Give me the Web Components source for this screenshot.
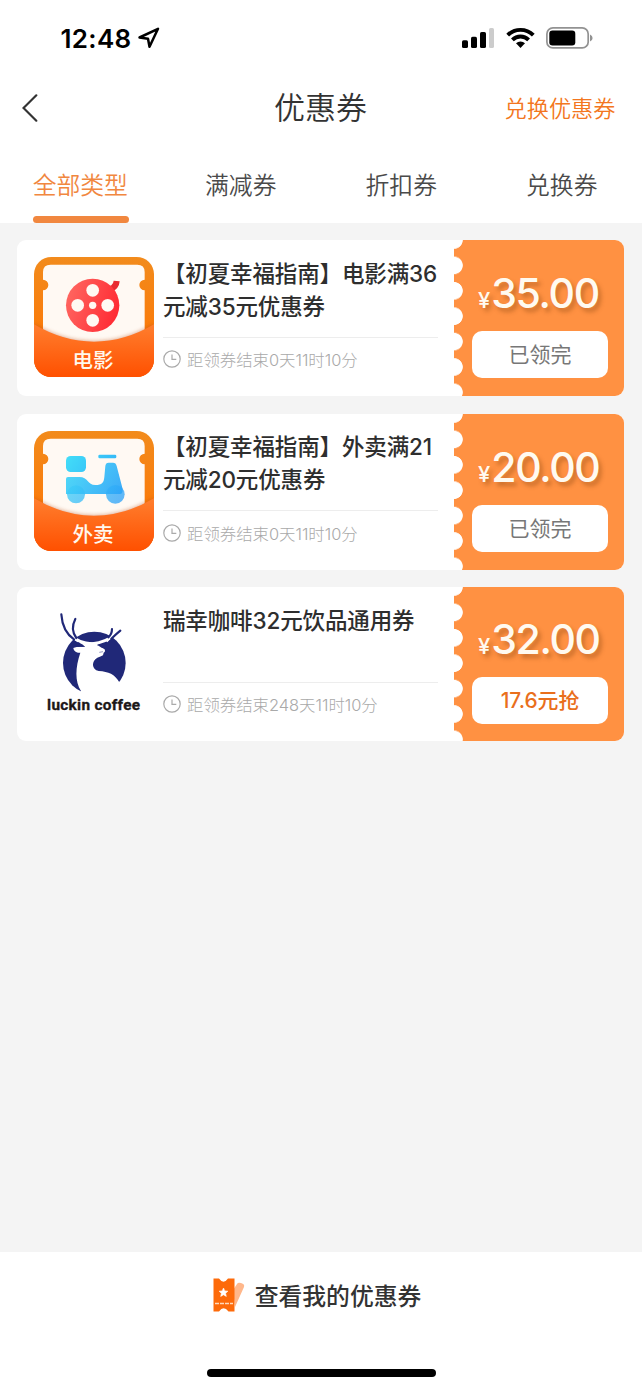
<!DOCTYPE html>
<html lang="zh-CN">
<head>
<meta charset="utf-8">
<title>优惠券</title>
<style>
html,body{margin:0;padding:0}
body{width:642px;height:1389px;overflow:hidden;font-family:Inter,"Noto Sans CJK SC",sans-serif;color:#333}
</style>
</head>
<body>
<coupon-app></coupon-app>

<template id="status-bar">
<style>
:host{display:flex;height:76px;box-sizing:border-box;padding:0 49px 0 60.5px;align-items:center;color:#000}
.time{font-size:26px;font-weight:600;letter-spacing:.3px;line-height:76px;padding-top:2px}
svg{display:block}
.loc{margin-left:6.500px}
.sp{flex:1}
.sig{margin-right:11px}.wifi{margin-right:11px}
</style>
<span class="time">12:48</span>
<svg class="loc" width="22" height="22" viewBox="0 0 22 22"><path d="M1.5 10.5 L20 1.8 L11.5 19.8 L10 11.8 Z" fill="none" stroke="#000" stroke-width="2.5" stroke-linejoin="round"/></svg>
<span class="sp"></span>
<svg class="sig" width="33" height="22" viewBox="-1 0 33 22"><rect x="0" y="13.3" width="6" height="7.7" rx="1.6"/><rect x="9" y="9.8" width="6" height="11.2" rx="1.6"/><rect x="18" y="5" width="6" height="16" rx="1.6"/><rect x="27" y="1" width="5" height="20" rx="1.6" fill="#ccc"/></svg>
<svg class="wifi" width="30" height="22" viewBox="-.5 0 30 22"><g fill="none" stroke="#000" stroke-width="3.9"><path d="M2.2 8.1 A18.2 18.2 0 0 1 27.8 8.1"/><path d="M6.9 12.9 A11.5 11.5 0 0 1 23.1 12.9"/></g><path d="M10.5 16.3 A6.4 6.4 0 0 1 19.5 16.3 L15 21Z"/></svg>
<svg width="47" height="22" viewBox="0 0 47 22"><rect x=".9" y=".9" width="41.3" height="20" rx="6" fill="none" stroke="#929292" stroke-width="1.7"/><rect x="3.3" y="3.5" width="26" height="15" rx="3.2"/><path d="M44 7.5 Q46.6 8.5 46.6 11 Q46.6 13.5 44 14.5Z" fill="#929292"/></svg>
</template>

<template id="nav-bar">
<style>
:host{display:grid;grid-template-columns:1fr auto 1fr;align-items:center;height:64px;padding:0 26.5px 0 22px}
svg{display:block}
.t{font-size:31px;line-height:40px;font-weight:350;margin-left:3.500px}
.a{justify-self:end;font-size:22.2px;color:#f37620;line-height:30px;font-weight:350;padding-top:1px}
</style>
<svg width="16" height="28" viewBox="0 0 16 28"><path d="M14.3 1.3 L1.5 14 L14.3 26.7" fill="none" stroke="#333" stroke-width="2.2" stroke-linecap="round"/></svg>
<span class="t"><slot></slot></span><span class="a"><slot name="action"></slot></span>
</template>

<template id="type-tab">
<style>
:host{display:flex;flex-direction:column;align-items:center;justify-content:space-between;flex:1;height:83px;color:#4a4a4a;font-size:23.8px;font-weight:350}
span{line-height:36px;padding-top:28px}
i{display:block;width:96px;height:7px;border-radius:3.5px;margin-left:1px}
:host([active]){color:#f1873f}
:host([active]) i{background:#f1873f}
</style>
<span><slot></slot></span><i></i>
</template>

<template id="coupon-card">
<style>
:host{display:flex;height:156px;width:607px;border-radius:9px;background:#fff;overflow:hidden}
:host([short]){height:154px}
.pic{width:120px;height:120px;margin:17px 9px 0 17px;flex:none}
.info{width:275px;flex:none;display:flex;flex-direction:column}
.title{height:97.5px;box-sizing:border-box;padding-top:16.500px;font-size:22.5px;letter-spacing:-.13px;line-height:33px;font-weight:500;color:#2e2e2e;border-bottom:1px solid #ededed;white-space:nowrap}
:host([short]) .title{height:95.5px}
.time{display:flex;align-items:center;height:43px;font-size:16.4px;color:#a9a9a9;font-weight:300}
.time svg{margin-right:6px}
.side{margin-left:auto;width:170px;flex:none;background:radial-gradient(circle at 0 50%,#fff 8.4px,transparent 9.1px) 0 -12.7px/10px 25.4px repeat-y,#ff9142;display:flex;flex-direction:column;align-items:flex-start}
.price{height:91px;box-sizing:border-box;padding:28px 0 0 24px;color:#fffaf0;white-space:nowrap;line-height:50px;font-size:41px;font-weight:500;text-shadow:3px 4px 4px rgba(120,60,10,.38);letter-spacing:-1.35px}
.price small{font-size:22px;letter-spacing:0;margin-right:1px}
.btn{margin-left:18px;width:136px;height:47px;border-radius:10px;background:#fff;text-align:center;font-size:21px;line-height:48px;color:#777;font-weight:400}
:host([short]) .price{height:89.5px;padding-top:27px}
:host([short]) .btn{color:#e96f1c;font-weight:500;font-size:20.9px}
</style>
<div class="pic"><slot name="pic"></slot></div>
<div class="info"><div class="title"><slot></slot></div>
<div class="time"><svg width="18" height="18" viewBox="0 0 18 18" fill="none" stroke="#aaa" stroke-width="1.2"><circle cx="9" cy="9" r="8.2"/><path d="M9 4.5V9.4H13.3"/></svg><slot name="time"></slot></div></div>
<div class="side"><div class="price"><small>¥</small><slot name="price"></slot></div><div class="btn"><slot name="btn"></slot></div></div>
</template>

<template id="ticket-thumb">
<style>:host,svg{display:block;width:120px;height:120px}.kind-scooter,.kind-film{display:none}:host([kind=film]) .kind-film,:host([kind=scooter]) .kind-scooter{display:block}
.w{position:relative}.n{position:absolute;left:0;right:2px;top:90px;text-align:center;color:#fff8ee;font-size:20.5px;line-height:27px;font-weight:500}</style>
<div class="w"><svg viewBox="72 66 360 360">
<defs>
<linearGradient id="o" x2="0" y2="1"><stop stop-color="#f28b1c"/><stop offset="1" stop-color="#ff7100"/></linearGradient>
<linearGradient id="p" x2="0" y2="1"><stop stop-color="#ff7e2e"/><stop offset="1" stop-color="#ff5000"/></linearGradient>
<linearGradient id="r" x1="0" y1="0.3" x2="1" y2=".6"><stop stop-color="#ff6660"/><stop offset="1" stop-color="#ff2a33"/></linearGradient>
<linearGradient id="b" gradientUnits="userSpaceOnUse" x1="168" y1="150" x2="345" y2="280"><stop stop-color="#42dcf8"/><stop offset="1" stop-color="#299df8"/></linearGradient>
<clipPath id="c"><rect x="72" y="66" width="360" height="360" rx="52"/></clipPath>
<filter id="s" x="-10%" y="-20%" width="120%" height="140%"><feGaussianBlur stdDeviation="7"/></filter>
</defs>
<g clip-path="url(#c)"><rect x="72" y="66" width="360" height="360" fill="url(#o)"/>
<path d="M122 89H382Q404 89 404 111V134A16 16 0 0 0 404 166V340H99V166A16 16 0 0 0 99 134V111Q99 89 122 89Z" fill="#fff9f3"/>
<path d="M72 268Q160 320 252 320T432 268V426H72Z" fill="#b54818" opacity=".55" filter="url(#s)"/>
<path d="M72 268Q160 320 252 320T432 268V426H72Z" fill="url(#p)"/></g>
<g class="kind-film"><path d="M285 155Q309 156 311 137L329 139Q328 163 300 174Z" fill="#e92b31"/><circle cx="248" cy="211" r="80" fill="url(#r)"/><g fill="#fff9f3"><circle cx="248" cy="166" r="19"/><circle cx="248" cy="256" r="19"/><circle cx="203" cy="211" r="19"/><circle cx="293" cy="211" r="19"/><circle cx="248" cy="211" r="11"/></g></g>
<g class="kind-scooter" fill="url(#b)"><rect x="168" y="141" width="60" height="48" rx="14"/><rect x="265" y="137" width="54" height="11" rx="4"/><path d="M168 210Q168 204 174 204H208C235 204 232 228 256 228C277 228 281 221 283 204L286 171Q287 161 296 161H309Q318 161 320 171L338 240Q339 255 330 255H168Z" opacity=".92"/><circle cx="198" cy="256" r="27" opacity=".75"/><circle cx="316" cy="256" r="28" opacity=".75"/></g>
</svg><span class="n"><slot></slot></span></div>
</template>

<template id="luckin-logo">
<style>:host{display:block;width:120px;height:120px;overflow:hidden}svg{display:block}</style>
<svg width="120" height="120" viewBox="-60 -12 360 360">
<circle cx="121" cy="165" r="94" fill="#202878"/>
<path d="M81 249C62 219 64 178 79 134C68 135 59 130 58 120C66 116 82 116 93 117C91 112 84 108 76 104L96 102L140 104L128 111C136 114 141 119 147 121L153 125Q154 132 149 134L147 142Q140 146 130 149C112 158 112 185 134 189C164 191 182 198 196 223L214 270H81Z" fill="#fff"/>
<path d="M46 80Q79 108 115 107Q156 104 182 78" fill="none" stroke="#fff" stroke-width="9"/>
<path d="M58 88L73 100M174 82L157 100" stroke="#fff" stroke-width="8"/>
<path d="M74 111Q84 112 94 117Q80 115 68 117" fill="#202878"/>
<path d="M136 133L147 131" stroke="#202878" stroke-width="1.500"/>
<g fill="none" stroke="#202878" stroke-width="6.5" stroke-linecap="round"><path d="M22 19C24 49 37 78 60 94"/><path d="M64 33Q48 64 67 90"/><path d="M174 63Q174 78 163 88"/><path d="M199 68Q188 77 172 92"/></g>
<text x="-21" y="306" textLength="279" lengthAdjust="spacing" font-family="Roboto" font-weight="700" font-size="46" fill="#1c1718" stroke="#1c1718">luckin coffee</text>
</svg>
</template>

<template id="bottom-bar">
<style>
:host{display:flex;flex-direction:column;align-items:center;justify-content:space-between;background:#fff;height:137px}
.l{display:flex;align-items:center;height:86px;font-size:23.8px;font-weight:500;margin-left:-8px}
.l svg{margin-right:10px}
.l span{margin-top:-2px}
.h{width:229px;height:8px;border-radius:4px;background:#000;margin-bottom:12px}
</style>
<div class="l"><svg width="32" height="34" viewBox="0 0 32 34"><path d="M20 12L24 6Q25 4 28 5Q32 6 31 9L22 29Z" fill="#ffb78b"/><path d="M.5 .5H6Q10.500 7 15 .5H21.500V33.500H15.500Q10.500 27 6 33.500H.5Z" fill="#fd6a0a"/><path d="m10.500 10 1.300 2.900 3.100.3-2.300 2.100.7 3.100-2.800-1.600-2.800 1.600.7-3.100-2.300-2.100 3.100-.3Z" fill="#fff" stroke="#fff" stroke-width=".6"/><path d="M2 25.500H20" stroke="#ffd9bd" stroke-width="1.400" stroke-dasharray="4 1"/></svg><span><slot></slot></span></div>
<div class="h"></div>
</template>

<template id="coupon-app">
<style>
:host{display:flex;flex-direction:column;height:1389px;background:#f4f4f4}
header{background:#fff;height:223px}
.tabs{display:flex}
main{flex:1;display:flex;flex-direction:column;gap:17.6px;padding:17px 0 0 17px}
</style>
<header><status-bar></status-bar><nav-bar>优惠券<span slot="action">兑换优惠券</span></nav-bar>
<div class="tabs"><type-tab active>全部类型</type-tab><type-tab>满减券</type-tab><type-tab>折扣券</type-tab><type-tab>兑换券</type-tab></div></header>
<main>
<coupon-card><ticket-thumb slot="pic" kind="film">电影</ticket-thumb>【初夏幸福指南】电影满36<br>元减35元优惠券<span slot="time">距领券结束0天11时10分</span><span slot="price">35.00</span><span slot="btn">已领完</span></coupon-card>
<coupon-card><ticket-thumb slot="pic" kind="scooter">外卖</ticket-thumb>【初夏幸福指南】外卖满21<br>元减20元优惠券<span slot="time">距领券结束0天11时10分</span><span slot="price">20.00</span><span slot="btn">已领完</span></coupon-card>
<coupon-card short><luckin-logo slot="pic"></luckin-logo>瑞幸咖啡32元饮品通用券<span slot="time">距领券结束248天11时10分</span><span slot="price">32.00</span><span slot="btn">17.6元抢</span></coupon-card>
</main>
<bottom-bar>查看我的优惠券</bottom-bar>
</template>

<script>
for (const name of ['status-bar','nav-bar','type-tab','coupon-card','ticket-thumb','luckin-logo','bottom-bar','coupon-app']) {
  customElements.define(name, class extends HTMLElement {
    constructor() {
      super();
      this.attachShadow({mode: 'open'}).append(document.getElementById(name).content.cloneNode(true));
    }
  });
}
</script>
</body>
</html>
